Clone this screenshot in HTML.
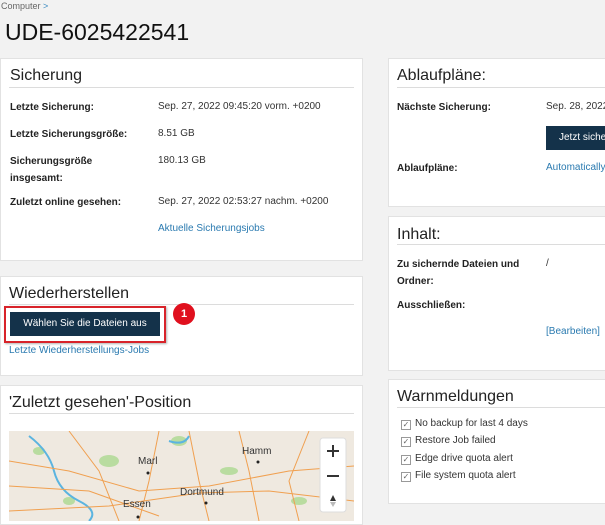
<!DOCTYPE html>
<html><head><meta charset="utf-8"><style>
*{box-sizing:border-box;margin:0;padding:0}
body{width:605px;height:521px;overflow:hidden;background:#f2f2f2;font-family:"Liberation Sans",Arial,sans-serif;color:#222;position:relative}
.a{position:absolute;white-space:nowrap}
.card{position:absolute;background:#fff;border:1px solid #e2e2e2}
.h{position:absolute;font-size:16px;color:#222}
.ln{position:absolute;height:1px;background:#dcdcdc}
.l{position:absolute;font-size:10px;font-weight:bold;color:#222;white-space:nowrap;line-height:17px}
.v{position:absolute;font-size:10px;color:#333;white-space:nowrap}
.k{position:absolute;font-size:10px;color:#2a7ab0;white-space:nowrap}
.btn{position:absolute;background:#14324a;color:#fff;font-size:10px;text-align:center}
.cb{position:absolute;font-size:10px;color:#333;white-space:nowrap}
.cb i{display:inline-block;width:10px;height:10px;border:1px solid #999;vertical-align:-1px;margin-right:4px;font-style:normal;font-size:8px;line-height:8px;text-align:center;color:#666}
</style></head><body>
<div class="a" style="left:1px;top:1px;font-size:9px;color:#666">Computer <span style="color:#3a8ac0">&gt;</span></div>
<div class="a" style="left:5px;top:19px;font-size:23px;color:#111">UDE-6025422541</div>

<div class="card" style="left:0;top:58px;width:363px;height:203px"></div>
<div class="h" style="left:10px;top:67px">Sicherung</div>
<div class="ln" style="left:9px;top:87px;width:345px"></div>
<div class="l" style="left:10px;top:99px">Letzte Sicherung:</div>
<div class="v" style="left:158px;top:101px">Sep. 27, 2022 09:45:20 vorm. +0200</div>
<div class="l" style="left:10px;top:126px">Letzte Sicherungsgröße:</div>
<div class="v" style="left:158px;top:128px">8.51 GB</div>
<div class="l" style="left:10px;top:153px">Sicherungsgröße<br>insgesamt:</div>
<div class="v" style="left:158px;top:155px">180.13 GB</div>
<div class="l" style="left:10px;top:194px">Zuletzt online gesehen:</div>
<div class="v" style="left:158px;top:196px">Sep. 27, 2022 02:53:27 nachm. +0200</div>
<div class="k" style="left:158px;top:223px">Aktuelle Sicherungsjobs</div>

<div class="card" style="left:0;top:276px;width:363px;height:100px"></div>
<div class="h" style="left:9px;top:285px">Wiederherstellen</div>
<div class="ln" style="left:9px;top:304px;width:345px"></div>
<div class="a" style="left:4px;top:306px;width:162px;height:37px;border:2px solid #d8232a;box-shadow:1px 1px 2px rgba(0,0,0,.3)"></div>
<div class="btn" style="left:10px;top:312px;width:150px;height:24px;line-height:24px">Wählen Sie die Dateien aus</div>
<div class="a" style="left:173px;top:303px;width:22px;height:22px;border-radius:50%;background:#e0101e;color:#fff;font-size:11px;font-weight:bold;text-align:center;line-height:22px">1</div>
<div class="k" style="left:9px;top:345px">Letzte Wiederherstellungs-Jobs</div>

<div class="card" style="left:0;top:385px;width:363px;height:140px"></div>
<div class="h" style="left:9px;top:394px">'Zuletzt gesehen'-Position</div>
<div class="ln" style="left:9px;top:413px;width:345px"></div>
<svg class="a" style="left:9px;top:431px" width="345" height="90" viewBox="0 0 345 90">
<rect width="345" height="90" fill="#efe9e0"/>
<g fill="#b9dca0"><ellipse cx="100" cy="30" rx="10" ry="6"/><ellipse cx="170" cy="10" rx="8" ry="5"/><ellipse cx="60" cy="70" rx="6" ry="4"/><ellipse cx="220" cy="40" rx="9" ry="4"/><ellipse cx="290" cy="70" rx="8" ry="4"/><ellipse cx="30" cy="20" rx="6" ry="4"/></g>
<path d="M20 5 Q40 20 45 40 T70 70 T80 90 M160 10 Q175 15 180 5" stroke="#5bb4e0" stroke-width="2" fill="none"/>
<g stroke="#f0a050" stroke-width="1" fill="none">
<path d="M0 30 L60 40 L130 60 L200 55 L280 40 L345 35"/>
<path d="M0 80 L100 75 L190 62 L260 60 L345 70"/>
<path d="M60 0 L90 40 L110 90"/><path d="M150 0 L140 50 L130 90"/><path d="M180 0 L190 50 L200 90"/>
<path d="M230 0 L240 40 L250 90"/><path d="M300 0 L280 50 L290 90"/><path d="M0 55 L80 60 L150 85"/>
</g>
<g font-family="Liberation Sans" font-size="10" fill="#333"><text x="129" y="33">Marl</text><text x="233" y="23">Hamm</text><text x="171" y="64">Dortmund</text><text x="114" y="76">Essen</text></g>
<g fill="#222"><circle cx="139" cy="42" r="1.5"/><circle cx="249" cy="31" r="1.5"/><circle cx="197" cy="72" r="1.5"/><circle cx="129" cy="86" r="1.5"/></g>
<rect x="311" y="7" width="26" height="74" rx="3" fill="#fff" stroke="#ddd"/>
<path d="M324 14v12M318 20h12M318 45h12" stroke="#333" stroke-width="2"/>
<path d="M324 64l-3 6h6z" fill="#333"/><path d="M324 76l-3-5h6z" fill="#bbb"/>
</svg>

<div class="card" style="left:388px;top:58px;width:230px;height:149px"></div>
<div class="h" style="left:397px;top:67px">Ablaufpläne:</div>
<div class="ln" style="left:397px;top:87px;width:220px"></div>
<div class="l" style="left:397px;top:99px">Nächste Sicherung:</div>
<div class="v" style="left:546px;top:101px">Sep. 28, 2022</div>
<div class="btn" style="left:546px;top:126px;width:70px;height:24px;line-height:24px;text-align:left;padding-left:13px">Jetzt sichern</div>
<div class="l" style="left:397px;top:160px">Ablaufpläne:</div>
<div class="k" style="left:546px;top:162px">Automatically</div>

<div class="card" style="left:388px;top:216px;width:230px;height:155px"></div>
<div class="h" style="left:397px;top:226px">Inhalt:</div>
<div class="ln" style="left:397px;top:244px;width:220px"></div>
<div class="l" style="left:397px;top:256px">Zu sichernde Dateien und<br>Ordner:</div>
<div class="v" style="left:546px;top:258px">/</div>
<div class="l" style="left:397px;top:297px">Ausschließen:</div>
<div class="k" style="left:546px;top:326px">[Bearbeiten]</div>

<div class="card" style="left:388px;top:379px;width:230px;height:125px"></div>
<div class="h" style="left:397px;top:388px">Warnmeldungen</div>
<div class="ln" style="left:397px;top:407px;width:220px"></div>
<div class="cb" style="left:401px;top:418px"><i>✓</i>No backup for last 4 days</div>
<div class="cb" style="left:401px;top:435px"><i>✓</i>Restore Job failed</div>
<div class="cb" style="left:401px;top:453px"><i>✓</i>Edge drive quota alert</div>
<div class="cb" style="left:401px;top:470px"><i>✓</i>File system quota alert</div>
</body></html>
